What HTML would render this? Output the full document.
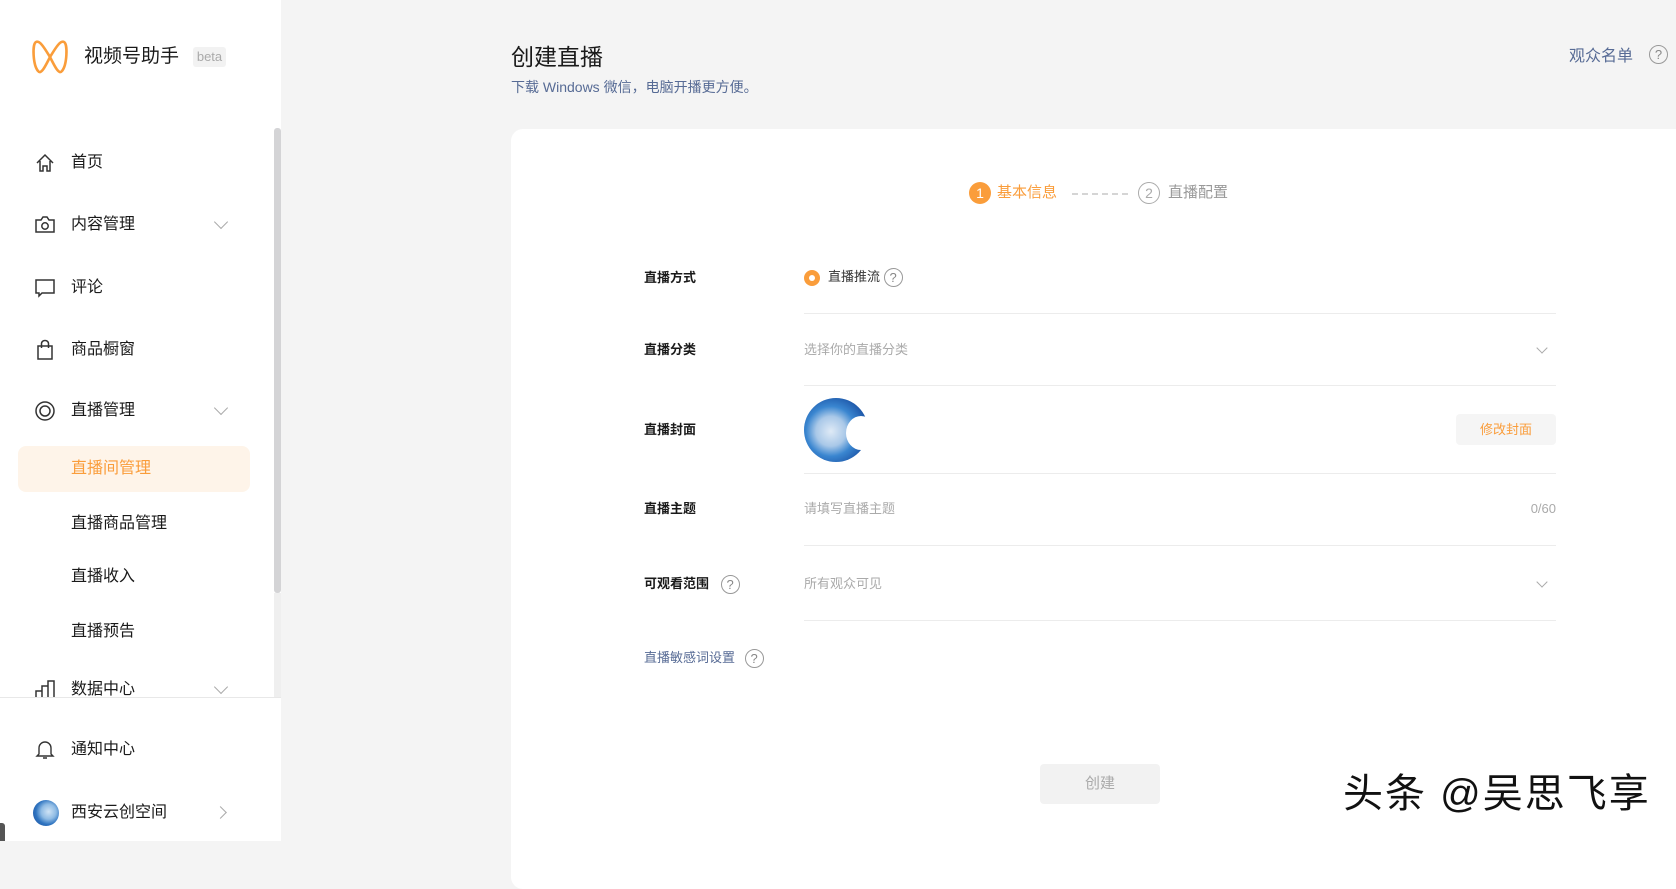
<!DOCTYPE html>
<html><head><meta charset="utf-8"><style>
*{box-sizing:border-box;margin:0;padding:0}
body{width:1676px;height:841px;overflow:hidden;background:#f4f4f4;font-family:"Liberation Sans","Noto Sans CJK SC",sans-serif;position:relative;color:#1a1a1a}
.a{position:absolute;white-space:nowrap}
#side{position:absolute;left:0;top:0;width:281px;height:841px;background:#fff}
.mi{position:absolute;left:71px;font-size:16px;line-height:20px;color:#1a1a1a}
.ic{position:absolute;left:34px;width:22px;height:22px}
.chev{position:absolute;left:216px;width:10px;height:10px;border-right:1.3px solid #aaa;border-bottom:1.3px solid #aaa;transform:rotate(45deg)}
.card{position:absolute;left:511px;top:129px;width:1200px;height:760px;background:#fff;border-radius:12px}
.lab{position:absolute;left:644px;font-size:13px;font-weight:bold;color:#1a1a1a;line-height:18px}
.ln{position:absolute;left:804px;width:752px;height:1px;background:#ececec}
.ph{position:absolute;left:804px;font-size:13px;color:#aaa;line-height:18px}
.q{display:inline-block;width:19px;height:19px;border:1.3px solid #999;border-radius:50%;font-size:13px;line-height:17px;text-align:center;color:#888;vertical-align:middle}
.dch{position:absolute;left:1538px;width:8px;height:8px;border-right:1.2px solid #aaa;border-bottom:1.2px solid #aaa;transform:rotate(45deg)}
</style></head><body>
<div id="side">
 <svg class="a" style="left:31px;top:39px" width="38" height="36" viewBox="0 0 38 36"><path d="M5 3 C1 5,2 26,7 32 C10 36,14 28,19 18 C24 28,28 36,31 32 C36 26,37 5,33 3 C29 1,24 10,19 18 C14 10,9 1,5 3Z" fill="none" stroke="#fa9d3b" stroke-width="2.6"/></svg>
 <div class="a" style="left:84px;top:45px;font-size:19px;line-height:24px;color:#1a1a1a">视频号助手</div>
 <div class="a" style="left:193px;top:47px;width:33px;height:20px;background:#f2f2f2;border-radius:3px;font-size:13px;color:#aaa;text-align:center;line-height:20px">beta</div>
 <div class="a" style="left:274px;top:128px;width:7px;height:465px;background:#d4d4d6;border-radius:3px"></div>
 <div class="a" style="left:274px;top:593px;width:7px;height:104px;background:#efefef"></div>

 <svg class="ic" style="top:152px" viewBox="0 0 22 22"><path d="M3 11 L11 3 L19 11 M6 9 V19 H9 V14 H13 V19 H16 V9" fill="none" stroke="#333" stroke-width="1.5"/></svg>
 <div class="mi" style="top:153px">首页</div>
 <svg class="ic" style="top:214px" viewBox="0 0 22 22"><path d="M2 6 H7 L9 3 H13 L15 6 H20 V18 H2Z" fill="none" stroke="#333" stroke-width="1.5"/><circle cx="11" cy="12" r="3.2" fill="none" stroke="#333" stroke-width="1.5"/></svg>
 <div class="mi" style="top:215px">内容管理</div><div class="chev" style="top:217px"></div>
 <svg class="ic" style="top:277px" viewBox="0 0 22 22"><path d="M2 3 H20 V16 H8 L5 19 V16 H2Z" fill="none" stroke="#333" stroke-width="1.5"/></svg>
 <div class="mi" style="top:278px">评论</div>
 <svg class="ic" style="top:339px" viewBox="0 0 22 22"><path d="M4 7 H18 V20 H4Z M7.5 9 V4.5 A3.5 3 0 0 1 14.5 4.5 V9" fill="none" stroke="#333" stroke-width="1.5"/></svg>
 <div class="mi" style="top:340px">商品橱窗</div>
 <svg class="ic" style="top:400px" viewBox="0 0 22 22"><circle cx="11" cy="11" r="9" fill="none" stroke="#333" stroke-width="1.5"/><circle cx="11" cy="11" r="5" fill="none" stroke="#333" stroke-width="1.5"/></svg>
 <div class="mi" style="top:401px">直播管理</div><div class="chev" style="top:403px"></div>
 <div class="a" style="left:18px;top:446px;width:232px;height:46px;background:#fef4e9;border-radius:8px"></div>
 <div class="mi" style="top:459px;color:#fa9d3b">直播间管理</div>
 <div class="mi" style="top:514px">直播商品管理</div>
 <div class="mi" style="top:567px">直播收入</div>
 <div class="mi" style="top:622px">直播预告</div>
 <svg class="ic" style="top:678px" viewBox="0 0 22 22"><path d="M2 20 V13 H8 V20 M8 20 V8 H14 V20 M14 20 V3 H20 V20 Z" fill="none" stroke="#333" stroke-width="1.5"/></svg>
 <div class="mi" style="top:680px">数据中心</div><div class="chev" style="top:682px"></div>
 <div class="a" style="left:0;top:697px;width:281px;height:144px;background:#fff;border-top:1px solid #e8e8e8"></div>
 <svg class="ic" style="top:738px" viewBox="0 0 22 22"><path d="M5 16 V10 A6 6 0 0 1 17 10 V16 L19 18 H3Z M9 20 H13" fill="none" stroke="#333" stroke-width="1.4"/></svg>
 <div class="mi" style="top:740px">通知中心</div>
 <div class="a" style="left:33px;top:800px;width:26px;height:26px;border-radius:50%;background:radial-gradient(circle at 60% 45%,#cfe3f5 0,#8fbbe4 35%,#2f74c0 60%,#1a4a9a 100%)"></div>
 <div class="mi" style="top:803px">西安云创空间</div>
 <div class="a" style="left:216px;top:808px;width:9px;height:9px;border-right:1.3px solid #aaa;border-top:1.3px solid #aaa;transform:rotate(45deg)"></div>
 <div class="a" style="left:0;top:823px;width:5px;height:18px;background:#555;border-radius:0 3px 0 0"></div>
</div>

<div class="a" style="left:511px;top:42px;font-size:23px;line-height:30px;color:#1a1a1a">创建直播</div>
<div class="a" style="left:511px;top:78px;font-size:14px;line-height:18px;color:#576b95">下载 Windows 微信，电脑开播更方便。</div>
<div class="a" style="left:1569px;top:47px;font-size:16px;line-height:20px;color:#576b95">观众名单</div>
<div class="a" style="left:1649px;top:45px;width:19px;height:19px;border:1.3px solid #999;border-radius:50%;font-size:13px;line-height:17px;text-align:center;color:#888">?</div>

<div class="card"></div>
<div class="a" style="left:969px;top:182px;width:22px;height:22px;border-radius:50%;background:#fa9d3b;color:#fff;font-size:14px;line-height:22px;text-align:center">1</div>
<div class="a" style="left:997px;top:183px;font-size:15px;line-height:20px;color:#fa9d3b">基本信息</div>
<div class="a" style="left:1072px;top:193px;width:56px;border-top:2px dashed #d5d5d5"></div>
<div class="a" style="left:1138px;top:182px;width:22px;height:22px;border-radius:50%;border:1.3px solid #aaa;color:#aaa;font-size:14px;line-height:20px;text-align:center">2</div>
<div class="a" style="left:1168px;top:183px;font-size:15px;line-height:20px;color:#999">直播配置</div>

<div class="lab" style="top:269px">直播方式</div>
<div class="a" style="left:804px;top:270px;width:16px;height:16px;border-radius:50%;background:#fa9d3b"><div style="margin:5px;width:6px;height:6px;border-radius:50%;background:#fff"></div></div>
<div class="a" style="left:828px;top:268px;font-size:13px;line-height:18px;color:#333">直播推流 <span class="q">?</span></div>
<div class="ln" style="top:313px"></div>
<div class="lab" style="top:341px">直播分类</div>
<div class="ph" style="top:341px">选择你的直播分类</div><div class="dch" style="top:344px"></div>
<div class="ln" style="top:385px"></div>
<div class="lab" style="top:421px">直播封面</div>
<div class="a" style="left:804px;top:398px;width:64px;height:64px;border-radius:50%;background:radial-gradient(circle at 42% 52%,#dfeaf6 0,#a9c8e8 30%,#3a86d0 50%,#1d56a8 75%,#173f84 100%)"></div>
<div class="a" style="left:846px;top:416px;width:30px;height:34px;border-radius:50%;background:#fff"></div>
<div class="a" style="left:1456px;top:414px;width:100px;height:31px;background:#f5f5f5;border-radius:4px;color:#fa9d3b;font-size:13px;line-height:31px;text-align:center">修改封面</div>
<div class="ln" style="top:473px"></div>
<div class="lab" style="top:500px">直播主题</div>
<div class="ph" style="top:500px">请填写直播主题</div>
<div class="a" style="left:1520px;top:500px;font-size:13px;line-height:18px;color:#aaa;width:36px;text-align:right">0/60</div>
<div class="ln" style="top:545px"></div>
<div class="lab" style="top:575px">可观看范围 <span class="q" style="margin-left:8px;font-weight:normal">?</span></div>
<div class="ph" style="top:575px">所有观众可见</div><div class="dch" style="top:578px"></div>
<div class="ln" style="top:620px"></div>
<div class="a" style="left:644px;top:649px;font-size:13px;line-height:18px;color:#576b95">直播敏感词设置 <span class="q" style="margin-left:6px">?</span></div>

<div class="a" style="left:1040px;top:764px;width:120px;height:40px;background:#f2f2f2;border-radius:4px;color:#aaa;font-size:15px;line-height:40px;text-align:center">创建</div>
<div class="a" style="left:1343px;top:771px;font-size:40px;line-height:46px;color:#111;letter-spacing:2px">头条 @吴思飞享</div>
</body></html>
